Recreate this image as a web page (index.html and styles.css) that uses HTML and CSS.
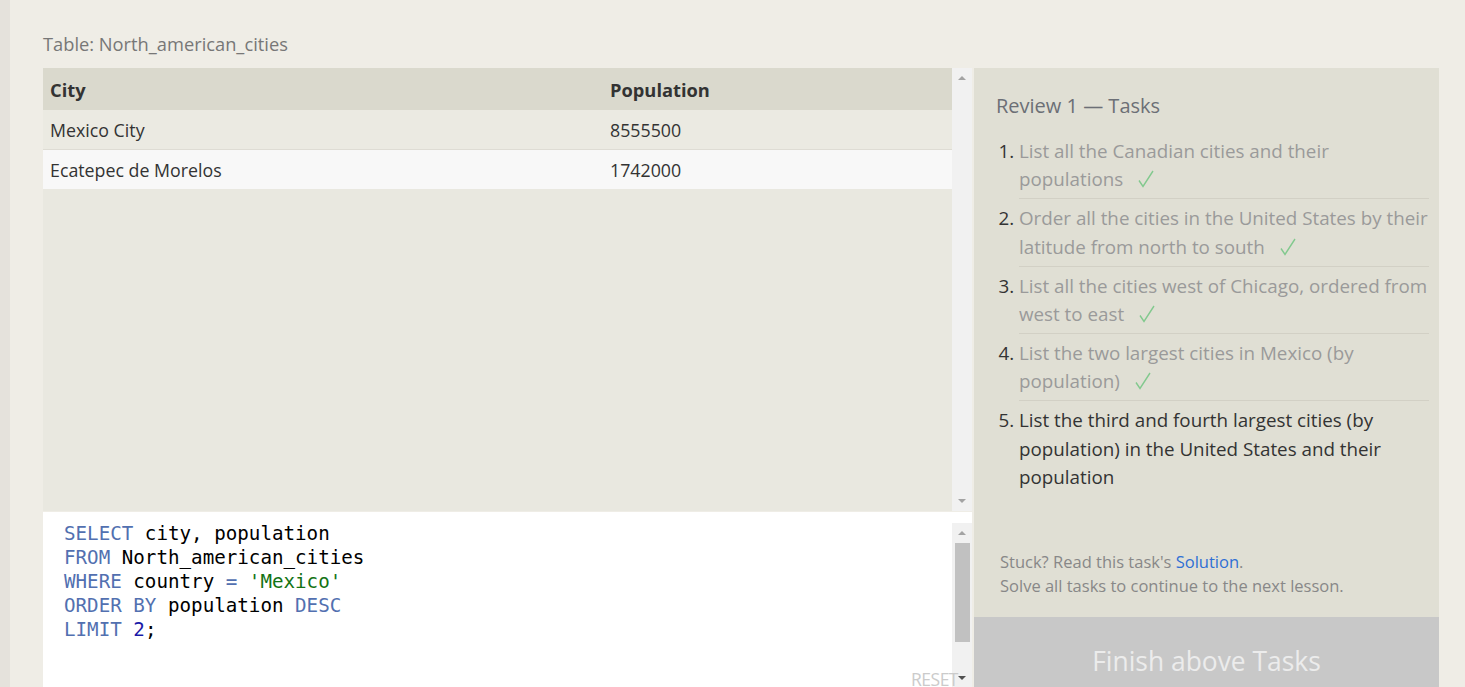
FILE: index.html
```html
<!DOCTYPE html>
<html>
<head>
<meta charset="utf-8">
<link rel="stylesheet" href="styles.css">
</head>
<body>
<div class="strip"></div>
<div class="main">
  <div class="table-title">Table: North_american_cities</div>
  <div class="workspace">
    <div class="left">
      <div class="results">
        <div class="results-body">
          <table class="grid">
            <thead>
              <tr><th class="c1">City</th><th>Population</th></tr>
            </thead>
            <tbody>
              <tr class="odd"><td class="c1">Mexico City</td><td>8555500</td></tr>
              <tr class="even"><td class="c1">Ecatepec de Morelos</td><td>1742000</td></tr>
            </tbody>
          </table>
        </div>
        <div class="vscroll">
          <span class="arrow up"></span>
          <span class="track"></span>
          <span class="arrow down"></span>
        </div>
      </div>
      <div class="editor">
        <div class="editor-body">
          <pre class="code"><span class="kw">SELECT</span> city, population
<span class="kw">FROM</span> North_american_cities
<span class="kw">WHERE</span> country <span class="op">=</span> <span class="str">'Mexico'</span>
<span class="kw">ORDER BY</span> population <span class="kw">DESC</span>
<span class="kw">LIMIT</span> <span class="num">2</span>;</pre>
          <span class="reset">RESET</span>
        </div>
        <div class="vscroll light">
          <span class="arrow up"></span>
          <span class="track"><span class="thumb"></span></span>
          <span class="arrow down dark"></span>
        </div>
      </div>
    </div>
    <div class="panel">
      <div class="panel-inner">
        <h2 class="panel-title">Review 1 — Tasks</h2>
        <ol class="tasks">
          <li class="done"><span class="txt">List all the Canadian cities and their populations <svg class="check" viewBox="0 0 16 18" width="16" height="18"><path d="M1 10.5 L5 16.5 L15 1" fill="none" stroke="#82c98e" stroke-width="1.4"/></svg></span></li>
          <li class="done"><span class="txt">Order all the cities in the United States by their latitude from north to south <svg class="check" viewBox="0 0 16 18" width="16" height="18"><path d="M1 10.5 L5 16.5 L15 1" fill="none" stroke="#82c98e" stroke-width="1.4"/></svg></span></li>
          <li class="done"><span class="txt">List all the cities west of Chicago, ordered from west to east <svg class="check" viewBox="0 0 16 18" width="16" height="18"><path d="M1 10.5 L5 16.5 L15 1" fill="none" stroke="#82c98e" stroke-width="1.4"/></svg></span></li>
          <li class="done"><span class="txt">List the two largest cities in Mexico (by population) <svg class="check" viewBox="0 0 16 18" width="16" height="18"><path d="M1 10.5 L5 16.5 L15 1" fill="none" stroke="#82c98e" stroke-width="1.4"/></svg></span></li>
          <li class="current"><span class="txt">List the third and fourth largest cities (by population) in the United States and their population</span></li>
        </ol>
        <div class="help">
          <p>Stuck? Read this task's <a href="#" class="link">Solution</a>.</p>
          <p>Solve all tasks to continue to the next lesson.</p>
        </div>
      </div>
      <div class="finish">Finish above Tasks</div>
    </div>
  </div>
</div>
</body>
</html>
```

FILE: styles.css
```css
html, body {
  margin: 0;
  padding: 0;
  height: 100%;
  overflow: hidden;
}
body {
  display: flex;
  background: #efede6;
  font-family: "Open Sans", "Noto Sans", sans-serif;
  color: #333;
}
.strip {
  width: 10px;
  flex: none;
  background: #e5e2dc;
}
.main {
  flex: 1;
  padding: 33px 26px 0 33px;
  display: flex;
  flex-direction: column;
  min-width: 0;
}
.table-title {
  flex: none;
  font-size: 18.3px;
  line-height: 22px;
  color: #777;
  height: 35px;
}
.workspace {
  display: flex;
  gap: 2px;
  height: 660px;
  flex: none;
}
.left {
  width: 929px;
  flex: none;
  display: flex;
  flex-direction: column;
}
.results {
  height: 443px;
  flex: none;
  display: flex;
  background: #e9e8e0;
}
.results-body {
  flex: 1;
}
.grid {
  width: 100%;
  border-collapse: collapse;
}
.grid th, .grid td {
  text-align: left;
  padding: 0 7px;
}
.grid th {
  background: #dad9cd;
  font-weight: 700;
  font-size: 18.3px;
  height: 42px;
  color: #333;
}
.grid td {
  font-size: 17.8px;
  height: 39px;
  color: #333;
}
.grid .c1 {
  width: 546px;
}
.grid tr.odd td {
  background: #ebeae2;
  border-bottom: 1px solid #dedcd4;
}
.grid tr.even td {
  background: #f8f8f8;
}
.vscroll {
  width: 20px;
  flex: none;
  background: #f1f1f1;
  display: flex;
  flex-direction: column;
  align-items: center;
}
.vscroll .track {
  flex: 1;
  width: 100%;
  display: flex;
  justify-content: center;
}
.arrow {
  height: 20px;
  width: 100%;
  display: flex;
  align-items: center;
  justify-content: center;
}
.arrow::before {
  content: "";
  border-left: 4px solid transparent;
  border-right: 4px solid transparent;
}
.arrow.up::before {
  border-bottom: 4px solid #a3a3a3;
}
.arrow.down::before {
  border-top: 4px solid #a3a3a3;
}
.arrow.down.dark::before {
  border-top-color: #505050;
}
.editor {
  flex: none;
  height: 176px;
  display: flex;
  background: #fff;
  margin-top: 1px;
}
.editor-body {
  flex: 1;
  position: relative;
}
.vscroll.light {
  margin-top: 11px;
}
.thumb {
  width: 15px;
  height: 99px;
  background: #c1c1c1;
}
.code {
  margin: 0;
  padding: 10px 21px;
  font-family: "DejaVu Sans Mono", "Liberation Mono", monospace;
  font-size: 19.2px;
  line-height: 24px;
  color: #000;
}
.kw { color: #5270b0; }
.op { color: #5270b0; }
.str { color: #137313; }
.num { color: #1a1aa8; }
.reset {
  position: absolute;
  right: -6px;
  bottom: -3px;
  font-size: 17.5px;
  color: #cbcbcb;
  letter-spacing: -0.5px;
}
.panel {
  flex: 1;
  background: #e0dfd4;
  display: flex;
  flex-direction: column;
}
.panel-inner {
  height: 549px;
  flex: none;
  box-sizing: border-box;
  padding: 24px 10px 19px 22px;
  display: flex;
  flex-direction: column;
}
.panel-title {
  margin: 0 0 12px;
  font-size: 20px;
  line-height: 28px;
  font-weight: 400;
  color: #6c6f76;
}
.tasks {
  margin: 0;
  padding: 0 0 0 23px;
  font-size: 18.8px;
  line-height: 28.4px;
}
.tasks li {
  padding: 5px 0 4.5px 0;
  border-bottom: 1px solid #d2d0c5;
}
.tasks li:last-child {
  border-bottom: 0;
}
.tasks li::marker {
  color: #333;
}
.tasks li.done .txt {
  color: #9a9a9a;
}
.tasks li.current .txt {
  color: #333;
}
.check {
  margin-left: 10px;
  vertical-align: -2px;
}
.help {
  margin-top: auto;
  padding-left: 4px;
  font-size: 16.5px;
  line-height: 24px;
  color: #888;
}
.help p {
  margin: 0;
}
.link {
  color: #2f6fd4;
  text-decoration: none;
}
.finish {
  height: 88px;
  flex: none;
  background: #c8c8c8;
  color: #ececec;
  font-size: 26.4px;
  display: flex;
  align-items: center;
  justify-content: center;
}
```
